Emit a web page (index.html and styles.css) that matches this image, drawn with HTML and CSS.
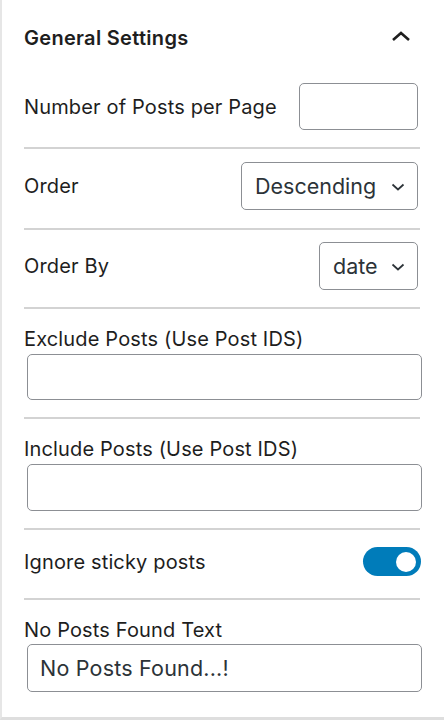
FILE: index.html
```html
<!DOCTYPE html>
<html lang="en">
<head>
<meta charset="utf-8">
<title>General Settings</title>
<link rel="stylesheet" href="styles.css">
</head>
<body>
<div class="panel">
  <div class="header">
    <h2 class="title">General Settings</h2>
    <svg class="chev-up" width="20" height="12" viewBox="0 0 20 12" aria-hidden="true">
      <polyline points="2,10 10,3 18,10" fill="none" stroke="#1e1e1e" stroke-width="2.6" stroke-linejoin="miter"/>
    </svg>
  </div>

  <div class="row row-inline r1">
    <label class="label">Number of Posts per Page</label>
    <div class="input input-num"></div>
  </div>

  <div class="row row-inline r2">
    <label class="label">Order</label>
    <div class="select select-order">
      <span class="select-text">Descending</span>
      <svg class="chev-down" width="14" height="8" viewBox="0 0 14 8" aria-hidden="true">
        <polyline points="1.5,1.5 7,6.5 12.5,1.5" fill="none" stroke="#2c3338" stroke-width="1.7"/>
      </svg>
    </div>
  </div>

  <div class="row row-inline r3">
    <label class="label">Order By</label>
    <div class="select select-orderby">
      <span class="select-text">date</span>
      <svg class="chev-down" width="14" height="8" viewBox="0 0 14 8" aria-hidden="true">
        <polyline points="1.5,1.5 7,6.5 12.5,1.5" fill="none" stroke="#2c3338" stroke-width="1.7"/>
      </svg>
    </div>
  </div>

  <div class="row row-stack r4">
    <label class="label">Exclude Posts (Use Post IDS)</label>
    <div class="input input-wide h46"></div>
  </div>

  <div class="row row-stack r5">
    <label class="label">Include Posts (Use Post IDS)</label>
    <div class="input input-wide h47"></div>
  </div>

  <div class="row row-inline r6">
    <label class="label">Ignore sticky posts</label>
    <div class="toggle"><span class="knob"></span></div>
  </div>

  <div class="row-stack r7">
    <label class="label">No Posts Found Text</label>
    <div class="input input-wide h48"><span class="input-text">No Posts Found...!</span></div>
  </div>
</div>
</body>
</html>
```

FILE: styles.css
```css
html, body {
  margin: 0;
  padding: 0;
  background: #ffffff;
}

body {
  font-family: Inter, "Noto Sans", "Liberation Sans", sans-serif;
  color: #1e1e1e;
  font-size: 20px;
  line-height: 24px;
}

.panel {
  width: 444px;
  height: 720px;
  box-sizing: border-box;
  border-left: 2px solid #e6e6e6;
  border-bottom: 3px solid #dedede;
  padding: 0 24px 0 22px;
  overflow: hidden;
}

.header {
  height: 74px;
  display: flex;
  align-items: center;
  justify-content: space-between;
}

.title {
  margin: 0;
  font-size: 20px;
  font-weight: 600;
  line-height: 24px;
  letter-spacing: 0.3px;
  padding-top: 1px;
}

.chev-up {
  margin-right: 9px;
  margin-top: -3px;
}

.row {
  border-bottom: 2px solid #d3d3d3;
}

.row-inline {
  display: flex;
  align-items: center;
  justify-content: space-between;
}

.row-stack {
  display: flex;
  flex-direction: column;
}

.label {
  font-size: 20px;
  line-height: 24px;
  letter-spacing: 0.15px;
  color: #1e1e1e;
}

.input {
  box-sizing: border-box;
  border: 1.5px solid #8c8f94;
  border-radius: 5px;
  background: #fff;
  display: flex;
  align-items: center;
}

.input-num {
  width: 119px;
  height: 47px;
  margin-right: 2px;
}

.input-wide {
  margin-left: 3px;
  margin-right: -2px;
}

.h46 { height: 46px; }
.h47 { height: 47px; }
.h48 { height: 48px; }

.input-text {
  padding-left: 12px;
  font-size: 21.5px;
  letter-spacing: 0.2px;
  color: #2c3338;
}

.select {
  box-sizing: border-box;
  height: 48px;
  border: 1.5px solid #8c8f94;
  border-radius: 5px;
  display: flex;
  align-items: center;
  justify-content: space-between;
  padding: 0 12px 0 13px;
  margin-right: 2px;
  color: #2c3338;
}

.select-text {
  font-size: 21.5px;
}

.select-order { width: 177px; }
.select-orderby { width: 99px; }

.chev-down {
  flex: none;
  margin-top: 1px;
}

.r1 { padding: 9px 0 17px; }
.r2 { padding: 13px 0 18px; }
.r3 { padding: 12px 0 17px; }
.r4 { padding: 18px 0 17px; gap: 3px; }
.r5 { padding: 18px 0 17px; gap: 3px; }
.r6 { padding: 17px 0 22px; }
.r7 { padding-top: 18px; gap: 2px; }

.toggle {
  box-sizing: border-box;
  width: 58px;
  height: 29px;
  border-radius: 15px;
  background: #007cba;
  display: flex;
  align-items: center;
  justify-content: flex-end;
  padding-right: 5px;
  margin-right: -1px;
}

.knob {
  width: 20px;
  height: 20px;
  border-radius: 50%;
  background: #ffffff;
}
```
